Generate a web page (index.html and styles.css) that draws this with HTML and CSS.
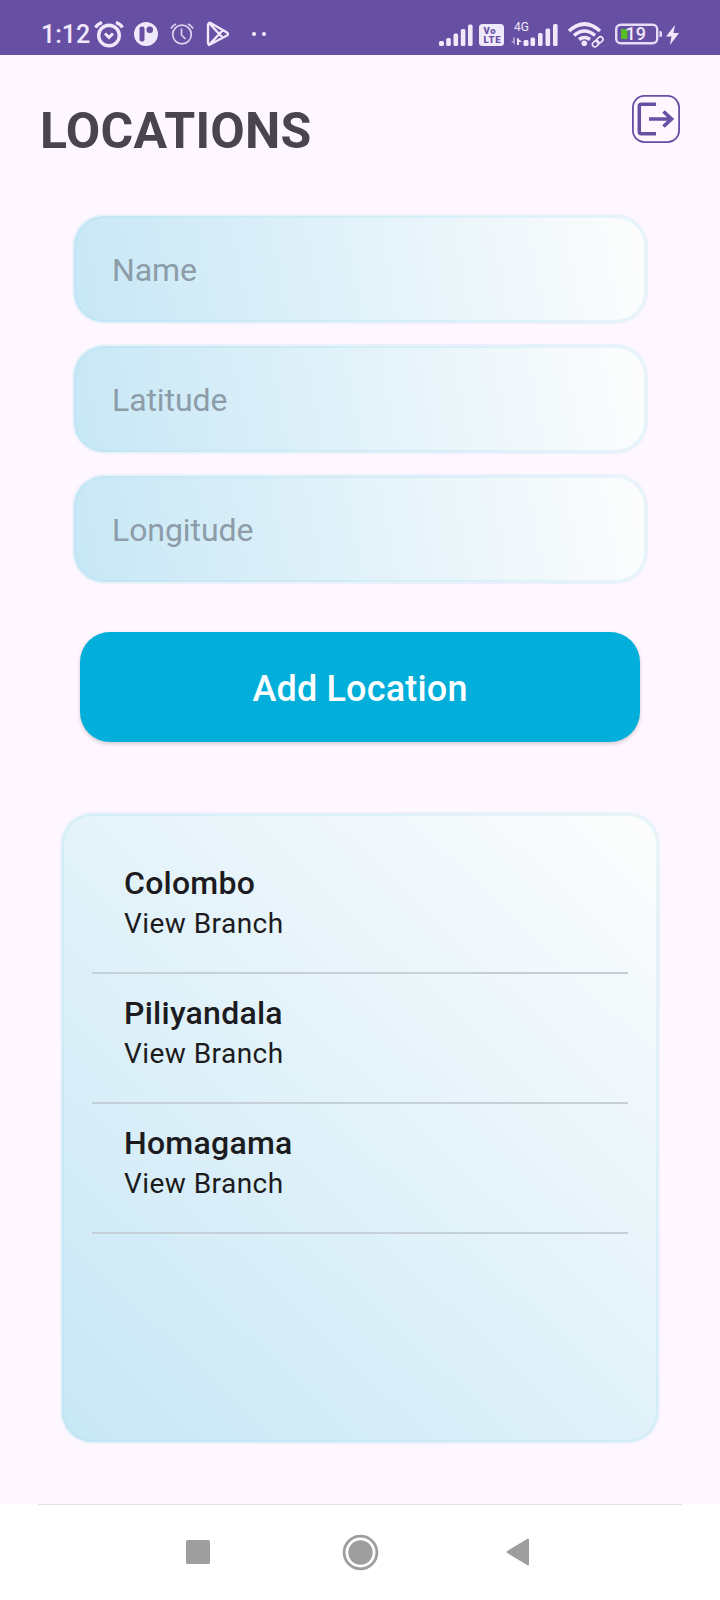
FILE: index.html
```html
<!DOCTYPE html>
<html lang="en">
<head>
<meta charset="utf-8">
<title>Locations</title>
<link rel="stylesheet" href="styles.css">
</head>
<body>
<div class="screen">
  <header class="status">
    <div class="status-group">
      <span class="clock">1:12</span>
      <svg class="icon-alarm" width="30" height="30" viewBox="94 20 30 30" fill="none" stroke="#f0e8fb">
        <circle cx="109" cy="35.500" r="10.300" stroke-width="3.400"/>
        <path d="M105 33.500l4 4 4-4" stroke-width="3"/>
        <path d="M95.500 27.500q2-3.500 6.500-5M122.500 27.500q-2-3.500-6.500-5" stroke-width="3.200"/>
      </svg>
      <svg class="icon-p" width="24" height="24" viewBox="0 0 24 24">
        <circle cx="12" cy="12" r="12" fill="#f0e8fb"/>
        <rect x="5.500" y="4.500" width="5" height="15" rx="2" fill="#6750a4"/>
        <rect x="12.500" y="4.500" width="6.500" height="6.500" rx="3" fill="#6750a4"/>
      </svg>
      <svg class="icon-alarm-thin" width="24" height="24" viewBox="0 0 24 24" fill="none" stroke="#dcd0f0" stroke-width="1.700">
        <circle cx="12" cy="12.500" r="9.300"/>
        <path d="M11.500 6.500v6.500l4 4M1 6.500Q2.500 3.500 6 2M23 6.500Q21.500 3.500 18 2"/>
      </svg>
      <svg class="icon-play" width="24" height="26" viewBox="0 0 24 26" fill="none" stroke="#f0e8fb" stroke-width="2.400" stroke-linejoin="round">
        <path d="M3 2q-1 1-1 2.500v17Q2 23 3 24L21 14.500q2-1.500 0-3L5 2.200Q4 1.500 3 2zM3 2l13.500 14.500M3 24L16.500 9.500"/>
      </svg>
      <svg class="icon-dots" width="16" height="6" viewBox="0 0 16 6" fill="#f0e8fb"><circle cx="3" cy="3" r="2.100"/><circle cx="13" cy="3" r="2.100"/></svg>
    </div>
    <div class="status-group">
      <svg width="36" height="24" viewBox="0 0 36 24" fill="#f0e8fb">
        <rect x="1" y="18" width="5" height="5" rx="1.500"/><rect x="8.200" y="15" width="4.600" height="8" rx="1.500"/><rect x="15.500" y="10.500" width="4.600" height="12.500" rx="1.500"/><rect x="22.800" y="6" width="4.600" height="17" rx="1.500"/><rect x="30" y="1.500" width="4.600" height="21.500" rx="1.500"/>
      </svg>
      <svg class="icon-volte" width="25" height="22" viewBox="0 0 25 22">
        <rect width="25" height="22" rx="3.500" fill="#f0e8fb"/>
        <text x="4.500" y="10" class="volte" textLength="12">Vo</text><text x="4.500" y="19" class="volte" textLength="17">LTE</text>
      </svg>
      <svg class="icon-4g" width="50" height="30" viewBox="510 18 50 30" fill="#f0e8fb">
        <text x="514" y="31" class="net">4G</text>
        <path opacity=".5" d="M513 37.500h2V45l-4-4h2z"/><path d="M517 45v-7.500l5 4.500h-3v3z"/>
        <rect x="523.500" y="40" width="5" height="6" rx="1.500"/><rect x="530.500" y="37.500" width="4.600" height="8.500" rx="1.500"/><rect x="538" y="33" width="4.600" height="13" rx="1.500"/><rect x="545.500" y="28.500" width="4.600" height="17.500" rx="1.500"/><rect x="553" y="24" width="4.600" height="22" rx="1.500"/>
      </svg>
      <svg class="icon-wifi" width="38" height="28" viewBox="567 21 38 28" fill="none" stroke="#f0e8fb">
        <path d="M569 31q15.500-14 31 0M574 35.500q10.500-9 21 0M579 39.500q5.500-4 11 0" stroke-width="3.600"/>
        <circle cx="584.300" cy="43.300" r="2.800" fill="#f0e8fb" stroke="none"/>
        <g stroke-width="1.600" transform="rotate(-42 597.500 42)"><rect x="591.500" y="39.500" width="7" height="5" rx="2.500"/><rect x="597" y="39.500" width="7" height="5" rx="2.500"/></g>
      </svg>
      <svg class="icon-battery" width="48" height="22" viewBox="614 23 48 22">
        <rect x="615.200" y="24.700" width="41" height="18.600" rx="4.500" fill="none" stroke="#e7dcf8" stroke-width="2.400"/>
        <rect x="620" y="29" width="6.500" height="10" rx="1" fill="#55bd26"/>
        <path d="M658.500 31h1q1.500 0 1.500 1.500v3q0 1.500-1.500 1.500h-1z" fill="#e7dcf8"/>
        <text x="624.500" y="40" class="level">19</text>
      </svg>
      <svg class="icon-bolt" width="14" height="20" viewBox="0 0 14 20"><path d="M9 0L0 11.500h5.500L4 20 13 8H7.500z" fill="#f0e8fb"/></svg>
    </div>
  </header>

  <main class="content">
    <div class="title-row">
      <h1 class="title">LOCATIONS</h1>
      <button class="logout" aria-label="Log out">
        <svg width="48" height="48" viewBox="0 0 48 48" fill="none" stroke="#6750a4">
          <rect x=".9" y=".9" width="46.200" height="46.200" rx="11.500" stroke-width="1.800"/>
          <path d="M24 9.300H9.300q-2 0-2 2v25.400q0 2 2 2H24" stroke-width="3.500"/>
          <path d="M17 24h22.500M31.500 16.500l8 7.500-8 7.500" stroke-width="3.700"/>
        </svg>
      </button>
    </div>

    <form class="fields">
      <div class="field"><span class="hint">Name</span></div>
      <div class="field"><span class="hint">Latitude</span></div>
      <div class="field"><span class="hint">Longitude</span></div>
    </form>

    <button class="add">Add Location</button>

    <ul class="list">
      <li class="item"><span class="place">Colombo</span><span class="sub">View Branch</span></li>
      <li class="item"><span class="place">Piliyandala</span><span class="sub">View Branch</span></li>
      <li class="item"><span class="place">Homagama</span><span class="sub">View Branch</span></li>
    </ul>
  </main>

  <nav class="nav">
    <svg width="24" height="24" viewBox="0 0 24 24"><rect width="24" height="24" rx="1.500" fill="#9e9e9e"/></svg>
    <svg class="nav-home" width="37" height="37" viewBox="0 0 37 37"><circle cx="18.500" cy="18.500" r="16.400" fill="none" stroke="#9e9e9e" stroke-width="2.800"/><circle cx="18.500" cy="18.500" r="12.200" fill="#9e9e9e"/></svg>
    <svg width="24" height="28" viewBox="0 0 24 28"><path d="M22 1.500v25L1.500 14z" fill="#9e9e9e" stroke="#9e9e9e" stroke-width="2" stroke-linejoin="round"/></svg>
  </nav>
</div>
</body>
</html>
```
FILE: styles.css
```css
* { box-sizing: border-box; margin: 0; padding: 0; }

body {
  width: 720px;
  background: #fef7ff;
  font-family: Roboto, "Liberation Sans", sans-serif;
}

button { border: 0; background: none; font-family: inherit; }
svg { display: block; flex: none; }

.screen {
  display: flex;
  flex-direction: column;
  width: 720px;
  height: 1600px;
  overflow: hidden;
}

.status {
  display: flex;
  justify-content: space-between;
  height: 55px;
  padding: 15px 40px 0 41px;
  background: #6750a4;
}

.status-group { display: flex; align-items: center; height: 40px; }

.clock {
  width: 53px;
  color: #f0e8fb;
  font-size: 25px;
  font-weight: 500;
  line-height: 42px;
  white-space: nowrap;
}

.icon-p { margin: -2px 0 0 10px; }
.icon-alarm-thin { margin: -2px 0 0 12px; }
.icon-play { margin: -2px 0 0 12px; }
.icon-dots { margin: -2px 0 0 21px; }
.icon-volte { margin-left: 5px; }
.icon-4g { margin: -4px 0 0 6px; }
.icon-wifi { margin-left: 7px; }
.icon-battery { margin: -2px 0 0 10px; }
.icon-bolt { margin: 0 0 0 3px; }

.volte { font-size: 9.5px; font-weight: 900; fill: #6750a4; }
.net { font-size: 12px; }
.level { font-size: 18px; font-weight: 500; fill: #f0e8fb; }

.content { display: flex; flex-direction: column; height: 1449px; }

.title-row {
  display: flex;
  justify-content: space-between;
  height: 161px;
  padding: 40px 40px 0 40px;
}

.title {
  margin-top: 6px;
  color: #49454f;
  font-size: 50px;
  font-weight: 700;
  letter-spacing: .25px;
  line-height: 60px;
}

.logout { width: 48px; height: 48px; }

.fields { display: flex; flex-direction: column; gap: 24px; padding: 0 74px; }

.field {
  height: 106px;
  padding: 1px 38px 0;
  border-radius: 30px;
  background: linear-gradient(79.500deg, #c7e7f6, #fdfdfd);
  box-shadow: 0 0 0 2px rgba(165, 225, 238, .22), inset 0 0 0 2px rgba(165, 225, 238, .25);
}

.hint {
  color: #8c9ca8;
  font-size: 32px;
  letter-spacing: -.08px;
  line-height: 106px;
}

.add {
  height: 110px;
  margin: 50px 80px 0;
  padding-top: 3px;
  border-radius: 30px;
  background: #02aeda;
  color: #fff;
  font-size: 36px;
  font-weight: 500;
  letter-spacing: .18px;
  box-shadow: 0 2px 4px rgba(0, 0, 0, .18);
}

.list {
  height: 628px;
  margin: 72px 62px 0;
  padding: 30px 30px 0;
  border-radius: 30px;
  background: linear-gradient(43.500deg, #c7e7f6, #fdfdfd);
  box-shadow: 0 0 0 2px rgba(165, 225, 238, .22), inset 0 0 0 2px rgba(165, 225, 238, .25);
  list-style: none;
}

.item {
  display: flex;
  flex-direction: column;
  height: 130px;
  padding: 19px 32px 0;
  border-bottom: 2px solid #c5d0d9;
  color: #1c1b20;
}

.place { font-size: 32px; font-weight: 500; letter-spacing: .25px; line-height: 40px; }
.sub { font-size: 28px; line-height: 41px; letter-spacing: .45px; }

.nav {
  display: flex;
  align-items: center;
  justify-content: space-between;
  height: 96px;
  padding: 0 190px 0 186px;
  background: linear-gradient(#e4dee7, #e4dee7) center top / 644px 1px no-repeat #fff;
}

.nav-home { margin-left: 5px; }
```
